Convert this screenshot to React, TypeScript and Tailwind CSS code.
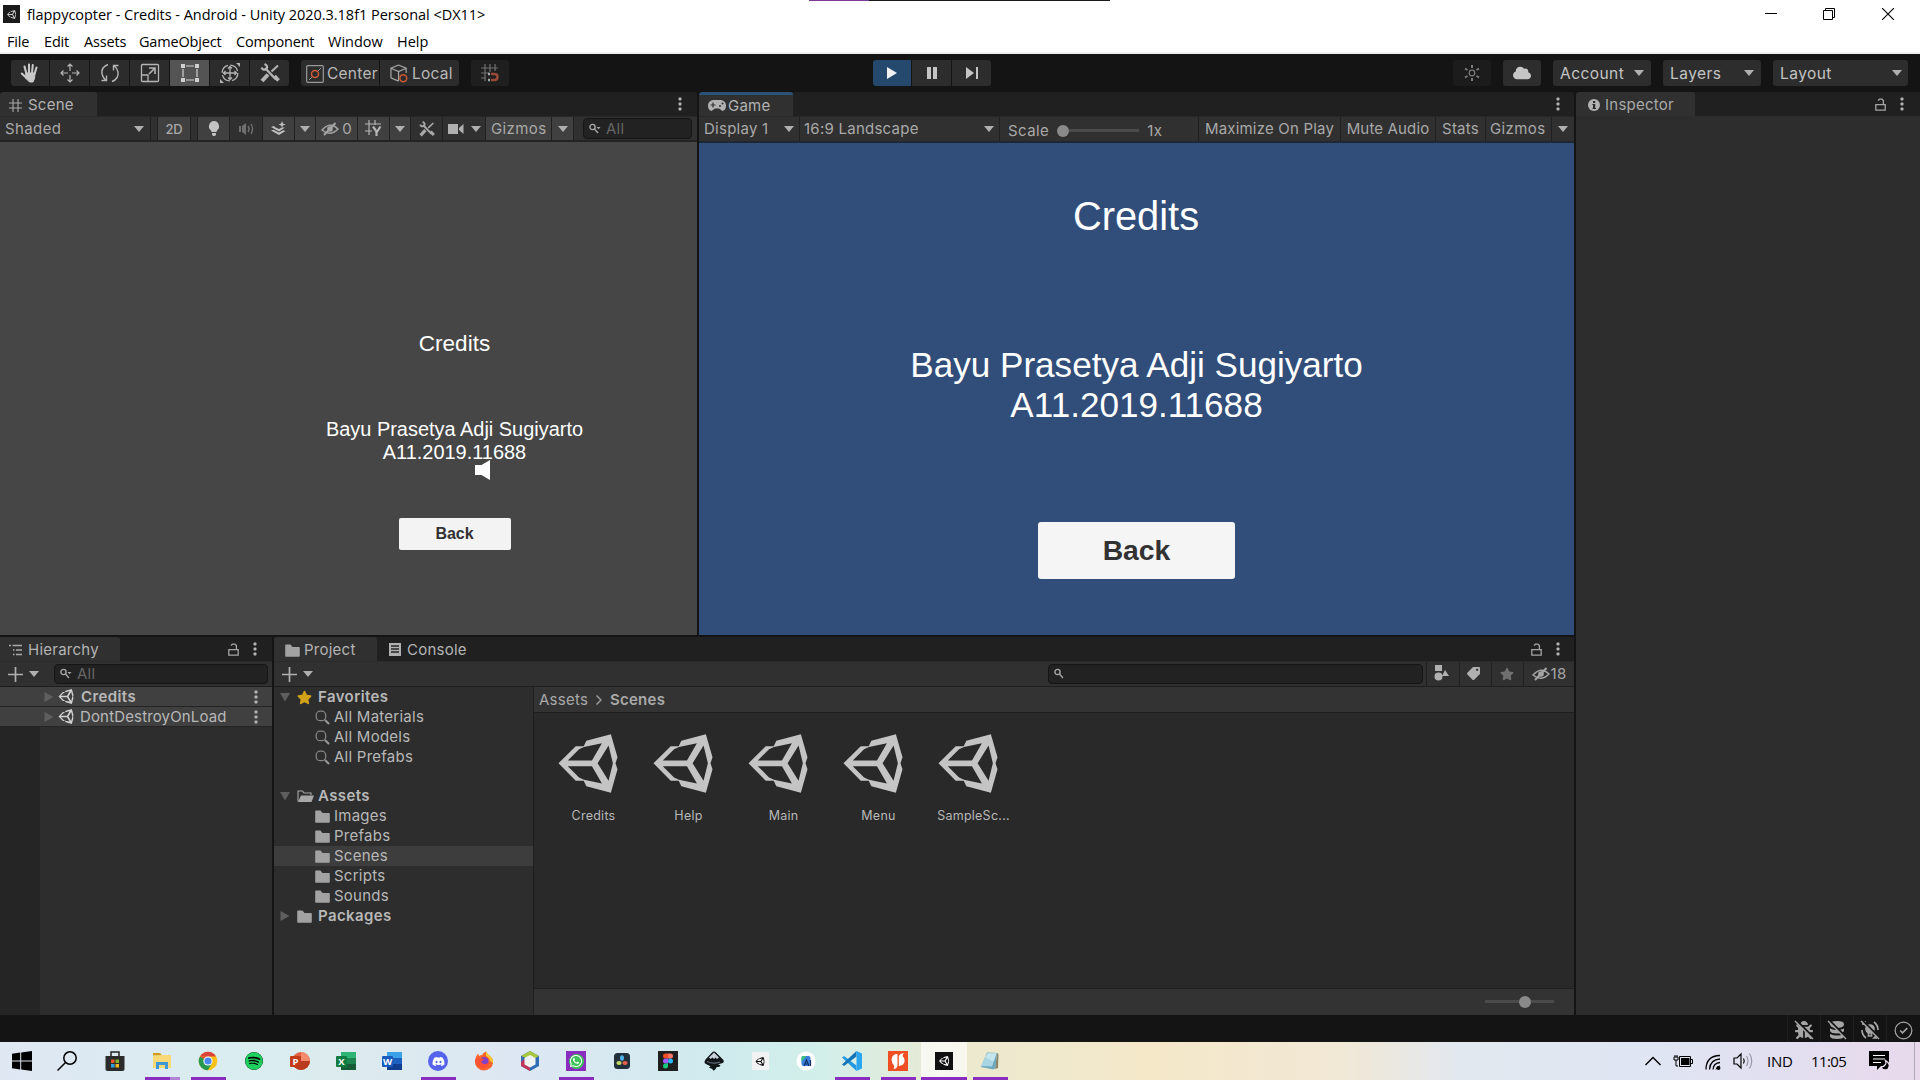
import React from "react";
import type { ReactNode } from "react";
import { FaSpotify, FaDiscord, FaWhatsapp, FaCloud, FaStar, FaBug, FaTag } from "react-icons/fa";

const Arrow = ({ className = "text-[#b0b0b0]" }: { className?: string }) => (
  <svg viewBox="0 0 10 6" className={`h-[6px] w-[10px] shrink-0 ${className}`}>
    <path d="M0 0h10L5 6z" fill="currentColor" />
  </svg>
);

const Dots = ({ className = "" }: { className?: string }) => (
  <svg viewBox="0 0 4 14" className={`h-[14px] w-[4px] shrink-0 text-[#b5b5b5] ${className}`} fill="currentColor">
    <rect x=".5" y="0.5" width="3" height="3" rx="1" />
    <rect x=".5" y="5.5" width="3" height="3" rx="1" />
    <rect x=".5" y="10.5" width="3" height="3" rx="1" />
  </svg>
);

const Lock = ({ className = "" }: { className?: string }) => (
  <svg viewBox="0 0 11 13" className={`h-[13px] w-[11px] shrink-0 text-[#a5a5a5] ${className}`} fill="none" stroke="currentColor" strokeWidth="1.3">
    <path d="M.8 6.6h9.4v5.6H.8z" />
    <path d="M8.4 6.500V2.600L7 1.200H4.500L3 2.600" />
  </svg>
);

const UnityLogo = ({ className = "" }: { className?: string }) => (
  <svg viewBox="0 0 178 178" className={className} fill="currentColor" fillRule="evenodd">
    <path d="M0 88L52 37h24l8-17L158 1l20 69-6 18 6 18-20 71-74-19-8-17H52zM28 80h73l30-52-54 11-15 7zM28 97l34 34 15 7 54 11-30-52zM118 88l33 53 13-53-13-53z" />
  </svg>
);

const Glass = ({ drop = false }: { drop?: boolean }) => (
  <svg viewBox="0 0 14 12" className="h-3 w-[14px] shrink-0 text-[#a8a8a8]" fill="none" stroke="currentColor" strokeWidth="1.4">
    <circle cx="3.500" cy="4" r="2.600" />
    <path d="M5.500 6l3.500 4" />
    {drop && <path d="M7.500 4h4l-2 2.200z" fill="currentColor" stroke="none" />}
  </svg>
);

const SearchGlass = () => (
  <svg viewBox="0 0 15 15" className="h-[15px] w-[15px] shrink-0" fill="none">
    <rect x="1.200" y="1.200" width="9.500" height="9.500" rx="4" stroke="#858585" strokeWidth="1.300" />
    <path d="M10 10l4 4" stroke="#9a9a9a" strokeWidth="2" />
  </svg>
);

const Folder = () => (
  <svg viewBox="0 0 15 13" className="h-[13px] w-[15px] shrink-0 text-[#a2a2a2]" fill="currentColor">
    <path d="M1 .5h4.500L7.500 3H14q.8 0 .8.8V12q0 .8-.8.8H1q-.8 0-.8-.8V1.300Q.2.5 1 .5z" />
  </svg>
);

const OpenFolder = () => (
  <svg viewBox="0 0 17 13" className="h-[13px] w-[17px] shrink-0 text-[#a8a8a8]" fill="none">
    <path d="M1 11.500V1h4.500L7 3h7v2" stroke="currentColor" strokeWidth="1.100" />
    <path d="M4 5.500h13L14.500 12H1z" fill="currentColor" />
  </svg>
);

const Plus = () => (
  <svg viewBox="0 0 15 15" className="h-[15px] w-[15px] shrink-0 text-[#b0b0b0]" stroke="currentColor" strokeWidth="1.700">
    <path d="M7.500 0v15M0 7.500h15" />
  </svg>
);

const Wrench = ({ className = "" }: { className?: string }) => (
  <svg viewBox="0 0 20 20" className={className} fill="none" stroke="currentColor">
    <path d="M5 5l11 11.500" strokeWidth="2.400" />
    <path d="M1.500 4.500q1.500 3.500 5 1.500Q8.500 3 4.500 1" strokeWidth="2.200" />
    <path d="M14.500 13l4 4.500" strokeWidth="3.600" />
    <path d="M18 2.500l-6.500 6" strokeWidth="2" />
    <path d="M8 11.500l-6 6.500" strokeWidth="4" />
  </svg>
);

const EyeOff = () => (
  <svg viewBox="0 0 18 14" className="h-[14px] w-[18px] shrink-0 text-[#a5a5a5]" fill="none" stroke="currentColor">
    <path d="M1 8Q9-1 17 7Q9 15 1 8z" strokeWidth="1.400" />
    <circle cx="9" cy="7" r="2.800" fill="currentColor" stroke="none" />
    <path d="M3 13L14.500 1" strokeWidth="2" />
  </svg>
);

const Triangle = ({ open }: { open: boolean }) => (
  <svg viewBox="0 0 10 10" className="h-[10px] w-[10px] shrink-0 text-[#5e5e5e]" fill="currentColor">
    {open ? <path d="M0 1h10L5 9.500z" /> : <path d="M.5 0L9.500 5l-9 5z" />}
  </svg>
);

function TitleBar() {
  return (
    <div className="flex h-[28px] items-start bg-white text-black">
      <div className="ml-[3px] mt-[5px] flex h-[18px] w-[17px] items-center justify-center bg-[#1a1a1a] text-[#c9c9c9]">
        <UnityLogo className="h-[9px] w-[9px]" />
      </div>
      <div className="ml-[7px] w-[782px] whitespace-nowrap font-['Open_Sans'] text-[14.500px] leading-[29px] tracking-[-0.035px]">
        flappycopter - Credits - Android - Unity 2020.3.18f1 Personal &lt;DX11&gt;
      </div>
      <div className="flex h-px w-[301px]">
        <div className="w-[60px] bg-[#7b3a96]" />
        <div className="grow bg-[#1c1a1d]" />
      </div>
      <div className="ml-auto mr-[26px] mt-[8px] flex">
        <svg viewBox="0 0 12 12" className="h-3 w-3" stroke="#000"><path d="M0 5.500h12" /></svg>
        <svg viewBox="0 0 12 12" className="ml-[46px] h-3 w-3" stroke="#000" fill="none"><path d="M.5 2.500h9v9h-9zM2.500 2.500v-2h9v9h-2" /></svg>
        <svg viewBox="0 0 12 12" className="ml-[47px] h-3 w-3" stroke="#000" strokeWidth="1.100"><path d="M0 0l12 12M12 0L0 12" /></svg>
      </div>
    </div>
  );
}

function MenuBar() {
  return (
    <div className="flex h-[26px] border-b-2 border-[#f0f0f0] bg-white font-['Open_Sans'] text-[14.500px] leading-[27px] tracking-[-0.18px] text-black">
      <span className="ml-[7px] w-[37px]">File</span>
      <span className="w-[40px]">Edit</span>
      <span className="w-[55px]">Assets</span>
      <span className="w-[97px]">GameObject</span>
      <span className="w-[92px]">Component</span>
      <span className="w-[69px] tracking-[0px]">Window</span>
      <span className="tracking-[0px]">Help</span>
    </div>
  );
}

const Tool = ({ w, on = false, children }: { w: string; on?: boolean; children: ReactNode }) => (
  <div className={`flex items-center justify-center ${w} ${on ? "bg-[#545454]" : "bg-[#2c2c2c]"}`}>{children}</div>
);

const ic = "h-5 w-5";

function MainToolbar() {
  return (
    <div className="flex h-[38px] items-center bg-[#141414] text-[#b4b4b4]">
      <div className="ml-[11px] flex h-[26px] gap-px overflow-hidden rounded-[3px]">
        <Tool w="w-[38px]">
          <svg viewBox="0 0 20 20" className={ic} fill="none" stroke="#c8c8c8" strokeWidth="2.100" strokeLinecap="round">
            <path d="M6.500 11L4.500 3.500M9 10V1.500M12 10l.8-8M14.500 11l2-6.500M6.500 15L1.800 10.500" />
            <path d="M6 10h9l-.5 5.500-1.500 3.500H9.500L6 15.500z" fill="#c8c8c8" strokeWidth="1" />
          </svg>
        </Tool>
        <Tool w="w-[39px]">
          <svg viewBox="0 0 20 20" className={ic} fill="none" stroke="currentColor" strokeWidth="1.200">
            <path d="M10 1v7M10 12v7M1 10h7M12 10h7M7.500 3.500L10 1l2.500 2.500M7.500 16.500L10 19l2.500-2.500M3.500 7.500L1 10l2.500 2.500M16.500 7.500L19 10l-2.500 2.500" />
          </svg>
        </Tool>
        <Tool w="w-[39px]">
          <svg viewBox="0 0 20 20" className={ic} fill="none" stroke="currentColor" strokeWidth="1.400">
            <path d="M8 1.500Q1 4 2 11q1 4 4 6.500M1.500 17.500h5v-5M12 18.500Q19 16 18 9q-1-4-4-6.500M18.500 2.500h-5v5" />
          </svg>
        </Tool>
        <Tool w="w-[39px]">
          <svg viewBox="0 0 20 20" className={ic} fill="none" stroke="currentColor" strokeWidth="1.300">
            <rect x="1.500" y="1.500" width="17" height="17" rx="1" />
            <path d="M9 5h6v6M15 5l-6 6" strokeWidth="1.600" />
            <path d="M1.500 12H8v6.500" />
          </svg>
        </Tool>
        <Tool w="w-[39px]" on>
          <svg viewBox="0 0 20 20" className={ic} fill="none" stroke="#d0d0d0" strokeWidth="1.200">
            <path d="M6 3h8M6 17h8M3 6v8M17 6v8" />
            <path d="M1 1h4v4H1zM15 1h4v4h-4zM1 15h4v4H1zM15 15h4v4h-4z" fill="#d0d0d0" stroke="none" />
          </svg>
        </Tool>
        <Tool w="w-[39px]">
          <svg viewBox="0 0 20 20" className={ic} fill="none" stroke="currentColor" strokeWidth="1.300">
            <circle cx="10" cy="10" r="7.800" strokeDasharray="10 2.250" />
            <path d="M10 4v12M4 10h12M8 5.500l2-2 2 2M8 14.500l2 2 2-2M5.500 8l-2 2 2 2M14.500 8l2 2-2 2" />
            <path d="M16 0h4v4zM0 16v4h4z" fill="currentColor" stroke="none" />
          </svg>
        </Tool>
        <Tool w="w-[39px]"><Wrench className={`ml-px ${ic}`} /></Tool>
      </div>
      <div className="ml-[12px] flex h-[26px] gap-px overflow-hidden rounded-[3px] text-[15.500px] tracking-[0.25px] text-[#b9b9b9]">
        <div className="flex w-[78px] items-center bg-[#2c2c2c] pl-[5px] pt-px">
          <svg viewBox="0 0 18 18" className="mr-[3px] h-[18px] w-[18px] shrink-0" fill="none">
            <rect x=".7" y=".7" width="16.600" height="16.600" rx="1" stroke="#999" strokeWidth="1.200" />
            <path d="M3 15l3-3M12 6l3-3" stroke="#999" />
            <circle cx="9" cy="9" r="3.500" stroke="#cf5a36" strokeWidth="1.500" />
          </svg>
          Center
        </div>
        <div className="flex w-[79px] items-center bg-[#2c2c2c] pl-[10px] pt-px">
          <svg viewBox="0 0 20 20" className="mr-[3px] h-[19px] w-[19px] shrink-0" fill="none" stroke="#a5a5a5" strokeWidth="1.300">
            <path d="M9 1l8 3.500v5M9 1L1 4.500v10L9 18M1 4.500L9 8l8-3.500M9 8v10" />
            <circle cx="14" cy="15" r="3.600" stroke="#cf5a36" strokeWidth="1.600" />
          </svg>
          Local
        </div>
      </div>
      <div className="ml-[12px] flex h-[26px] w-[38px] items-center justify-center rounded-[3px] bg-[#1f1f1f]">
        <svg viewBox="0 0 18 18" className="h-[18px] w-[18px]" fill="none" stroke="#707070" strokeWidth="1.200">
          <path d="M4 0v17M9 0v8M14 0v7M0 4h17M0 9h8M0 14h5" />
          <path d="M10 10h3.500q3 0 3 3t-3 3H10" stroke="#9a4a36" strokeWidth="2.400" />
          <path d="M7 10h2M7 16h2" stroke="#aaa" strokeWidth="2.400" />
        </svg>
      </div>
      <div className="ml-[364px] flex h-[26px] gap-px overflow-hidden rounded-[3px]">
        <div className="flex w-[38px] items-center justify-center bg-[#24496d]">
          <svg viewBox="0 0 10 12" className="h-3 w-[10px]"><path d="M0 0l10 6-10 6z" fill="#f2f2f2" /></svg>
        </div>
        <div className="flex w-[39px] items-center justify-center bg-[#2d2d2d]">
          <svg viewBox="0 0 10 12" className="h-3 w-[10px]"><path d="M0 0h4v12H0zM6 0h4v12H6z" fill="#c4c4c4" /></svg>
        </div>
        <div className="flex w-[39px] items-center justify-center bg-[#2d2d2d]">
          <svg viewBox="0 0 12 12" className="h-3 w-3"><path d="M0 0l8 6-8 6zM10 0h2v12h-2z" fill="#c4c4c4" /></svg>
        </div>
      </div>
      <div className="ml-auto mr-[12px] flex h-[26px] gap-[12px] text-[15.500px] tracking-[0.45px] text-[#c4c4c4]">
        <div className="flex w-[38px] items-center justify-center rounded-[3px] bg-[#1c1c1c]">
          <svg viewBox="0 0 16 16" className="h-4 w-4" fill="none" stroke="#7c7c7c" strokeWidth="1.200">
            <circle cx="8" cy="8" r="2.800" />
            <path d="M8 0v3M8 13v3M1 3.500l2.500 1.500M15 3.500L12.500 5M1 12.500L3.500 11M15 12.500L12.500 11" strokeWidth="2" />
          </svg>
        </div>
        <div className="flex w-[38px] items-center justify-center rounded-[3px] bg-[#2d2d2d]"><FaCloud className="h-[18px] w-[18px] text-[#c6c6c6]" /></div>
        <div className="flex w-[98px] items-center justify-between rounded-[3px] bg-[#2d2d2d] pl-[7px] pr-[7px]"><span className="mt-px">Account</span><Arrow /></div>
        <div className="flex w-[98px] items-center justify-between rounded-[3px] bg-[#2d2d2d] pl-[7px] pr-[7px]"><span className="mt-px">Layers</span><Arrow /></div>
        <div className="flex w-[135px] items-center justify-between rounded-[3px] bg-[#2d2d2d] pl-[7px] pr-[6px]"><span className="mt-px">Layout</span><Arrow /></div>
      </div>
    </div>
  );
}

const Seg = ({ w, on = false, children, className = "" }: { w: string; on?: boolean; children?: ReactNode; className?: string }) => (
  <div className={`flex shrink-0 items-center border-r border-[#202020] ${w} ${on ? "bg-[#404040]" : "bg-[#303030]"} ${className}`}>{children}</div>
);

function ScenePanel() {
  return (
    <div className="flex w-[697px] flex-col overflow-hidden rounded-t-[3px]">
      <div className="flex h-[24px] items-center bg-[#202020]">
        <div className="flex h-full w-[97px] items-center rounded-tr-[3px] bg-[#303030] pl-[9px] pt-[2px] text-[#b4b4b4]">
          <svg viewBox="0 0 13 13" className="mr-[6px] h-[13px] w-[13px]" stroke="#aaa" strokeWidth="1.100"><path d="M4 0v13M9 0v13M0 4h13M0 9h13" /></svg>
          Scene
        </div>
        <Dots className="ml-auto mr-[15px]" />
      </div>
      <div className="flex h-[26px] border-b-2 border-t border-t-[#282828] border-b-[#232323] bg-[#303030] text-[#a9a9a9]">
        <Seg w="w-[151px]" className="justify-between pl-[5px] pr-[6px] tracking-[0.4px]">Shaded<Arrow /></Seg>
        <Seg w="w-[7px]" />
        <Seg w="w-[33px]" on className="justify-center text-[13px] font-medium tracking-[-0.2px]">2D</Seg>
        <Seg w="w-[7px]" />
        <Seg w="w-[32px]" on className="justify-center">
          <svg viewBox="0 0 12 15" className="h-[15px] w-3" fill="#c4c4c4"><path d="M6 0a5.300 5.300 0 0 1 3 9.500L8.500 11h-5L3 9.500A5.300 5.300 0 0 1 6 0zM4 12h4v1.500L7 15H5l-1-1.500z" /></svg>
        </Seg>
        <Seg w="w-[33px]" className="justify-center">
          <svg viewBox="0 0 16 12" className="ml-px h-3 w-4" fill="#6f6f6f"><path d="M0 3h2v6H0zM3 3l4-3v12L3 9z" /><path d="M9 3q2 3 0 6M12 1q3 5 0 10" stroke="#6f6f6f" fill="none" strokeWidth="1.400" /></svg>
        </Seg>
        <Seg w="w-[32px]" on className="justify-center">
          <svg viewBox="0 0 15 14" className="-mt-px h-[14px] w-[15px]" fill="#c0c0c0"><path d="M0 6l3-1 1.500 1.500L8 8l3-1.500 3 0L8 10.500zM0 9.500l2.500-.8L8 11.500l4-2.300 2.500.8L8 14z" /><path d="M11 0l.9 2.600 2.600.9-2.600.9L11 7l-.9-2.600-2.600-.9 2.600-.9z" /></svg>
        </Seg>
        <Seg w="w-[21px]" on className="justify-center"><Arrow /></Seg>
        <Seg w="w-[42px]" on className="justify-center gap-[3px]"><EyeOff />0</Seg>
        <Seg w="w-[32px]" on className="justify-center">
          <svg viewBox="0 0 17 17" className="-ml-px h-[17px] w-[17px]" fill="none" stroke="#b5b5b5" strokeWidth="1.200"><path d="M4 0v15M10 0v5M0 4h16M0 11h7" /><path d="M8 6.500l3.500 5v4.500M15.500 6.500l-4 6" strokeWidth="2.200" /></svg>
        </Seg>
        <Seg w="w-[21px]" on className="justify-center"><Arrow /></Seg>
        <Seg w="w-[32px]" className="justify-center"><Wrench className="h-4 w-4" /></Seg>
        <Seg w="w-[43px]" className="justify-center gap-[7px]">
          <svg viewBox="0 0 16 12" className="h-3 w-4" fill="#b0b0b0"><path d="M0 1h10v10H0zM11 5l4.500-4v10L11 7z" /></svg>
          <Arrow className="w-[9px] text-[#b0b0b0]" />
        </Seg>
        <Seg w="w-[66px]" on className="pl-[5px] tracking-[0.4px]">Gizmos</Seg>
        <Seg w="w-[22px]" on className="justify-center"><Arrow /></Seg>
        <div className="ml-[9px] mt-px flex h-[21px] w-[109px] items-center gap-[3px] rounded-[4px] border border-[#151515] bg-[#222] pl-[5px] text-[#666]"><Glass drop />All</div>
      </div>
      <div className="flex grow flex-col items-center bg-[#464646] pl-[212px] font-['Liberation_Sans'] tracking-normal text-white">
        <div className="mt-[191px] text-[22.500px] leading-[22px]">Credits</div>
        <div className="mt-[63px] whitespace-nowrap text-center text-[19.950px] leading-[22.600px]">
          Bayu Prasetya Adji Sugiyarto<br />A11.2019.11688
        </div>
        <svg viewBox="0 0 15 20" className="-mt-[3px] ml-[56px] h-5 w-[15px]" fill="#fff"><path d="M0 5h6.500L15 0v20l-8.500-5H0z" /></svg>
        <div className="mt-[38px] flex h-[32px] w-[112px] items-center justify-center rounded-[2px] bg-[#f3f3f3] text-[16px] font-bold text-[#323232]">Back</div>
      </div>
    </div>
  );
}

function GamePanel() {
  return (
    <div className="ml-[2px] flex w-[875px] flex-col overflow-hidden rounded-t-[3px]">
      <div className="flex h-[24px] items-center bg-[#202020]">
        <div className="flex h-full w-[94px] items-center rounded-t-[3px] border-t-[3px] border-[#2b5378] bg-[#303030] pl-[9px] text-[#b4b4b4]">
          <svg viewBox="0 0 18 11" className="mr-[2px] h-[11px] w-[18px]">
            <path d="M5 0h8q5 1 5 5.500T14.500 11L11 8.500H7L3.500 11Q0 10 0 5.500T5 0z" fill="#b2b2b2" />
            <path d="M5 2.500v5M2.500 5h5" stroke="#303030" strokeWidth="1.200" />
            <circle cx="14.500" cy="3.500" r="1" fill="#303030" /><circle cx="12" cy="6" r="1" fill="#303030" />
          </svg>
          Game
        </div>
        <Dots className="ml-auto mr-[14px]" />
      </div>
      <div className="flex h-[27px] border-b-2 border-t border-t-[#282828] border-b-[#1f2733] bg-[#303030] text-[#a9a9a9]">
        <Seg w="w-[101px]" className="justify-between pl-[5px] pr-[5px]">Display 1<Arrow /></Seg>
        <Seg w="w-[200px]" className="justify-between pl-[4px] pr-[5px]">16:9 Landscape<Arrow /></Seg>
        <Seg w="w-[199px]" className="pl-[8px] pt-[3px] tracking-[0.4px]">
          Scale
          <div className="ml-[8px] flex w-[82px] items-center">
            <div className="h-3 w-3 rounded-full bg-[#8a8a8a]" />
            <div className="h-[3px] grow bg-[#4b4b4b]" />
          </div>
          <span className="ml-[8px]">1x</span>
        </Seg>
        <Seg w="w-[142px]" className="justify-center tracking-[0.2px]">Maximize On Play</Seg>
        <Seg w="w-[95px]" className="justify-center tracking-[0.15px]">Mute Audio</Seg>
        <Seg w="w-[50px]" className="justify-center">Stats</Seg>
        <Seg w="w-[66px]" className="pl-[4px] tracking-[0.4px]">Gizmos</Seg>
        <div className="flex grow items-center justify-center"><Arrow /></div>
      </div>
      <div className="flex grow flex-col items-center bg-[#314d79] font-['Liberation_Sans'] tracking-normal text-white">
        <div className="mr-px mt-[51px] text-[39.800px] leading-[44px]">Credits</div>
        <div className="mt-[107px] whitespace-nowrap text-center text-[35.100px] leading-[40px]">
          Bayu Prasetya Adji Sugiyarto<br />A11.2019.11688
        </div>
        <div className="mt-[97px] flex h-[57px] w-[197px] items-center justify-center rounded-[3px] bg-[#f5f5f5] pb-[2px] text-[28.300px] font-bold text-[#323232]">Back</div>
      </div>
    </div>
  );
}

const HierarchyRow = ({ label, bold = false }: { label: string; bold?: boolean }) => (
  <div className="flex h-[20px] items-center border-b border-[#242424] bg-[#404040] pl-[44px] text-[#b8b8b8]">
    <Triangle open={false} />
    <UnityLogo className="ml-[4px] h-[15px] w-[16px] text-[#d0d0d0]" />
    <span className={bold ? "ml-[7px] font-semibold tracking-[0.4px]" : "ml-[6px] tracking-[0.15px]"}>{label}</span>
    <Dots className="ml-auto mr-[14px]" />
  </div>
);

function HierarchyPanel() {
  return (
    <div className="flex w-[272px] flex-col">
      <div className="flex h-[24px] items-center bg-[#202020]">
        <div className="flex h-full w-[120px] items-center rounded-tr-[3px] bg-[#303030] pl-[9px] pt-[2px] text-[#b4b4b4]">
          <svg viewBox="0 0 13 12" className="mr-[6px] h-3 w-[13px]" stroke="#aaa" strokeWidth="1.300"><path d="M0 1.500h2M3.500 1.500H13M4 6h1.500M7 6h6M4 10.500h1.500M7 10.500h6" /></svg>
          Hierarchy
        </div>
        <Lock className="ml-auto" />
        <Dots className="ml-[14px] mr-[15px]" />
      </div>
      <div className="flex h-[26px] items-center border-b border-t border-b-[#1e1e1e] border-t-[#2a2a2a] bg-[#303030] pl-[8px]">
        <Plus />
        <Arrow className="ml-[6px] w-[9px] text-[#b0b0b0]" />
        <div className="-mt-px ml-[15px] flex h-[20px] w-[214px] items-center gap-[3px] rounded-[4px] border border-[#151515] bg-[#222] pl-[5px] text-[#666]"><Glass drop />All</div>
      </div>
      <HierarchyRow label="Credits" bold />
      <HierarchyRow label="DontDestroyOnLoad" />
      <div className="flex grow bg-[#2d2d2d]"><div className="w-[40px] bg-[#252525]" /></div>
    </div>
  );
}

const TreeRoot = ({ label, open, icon }: { label: string; open: boolean; icon: ReactNode }) => (
  <div className="flex h-[20px] items-center pl-[6px] font-semibold tracking-[0.4px]">
    <Triangle open={open} />
    <div className="ml-[7px] mr-[4px] flex w-[17px]">{icon}</div>
    {label}
  </div>
);

const TreeLeaf = ({ label, icon, on = false }: { label: string; icon: ReactNode; on?: boolean }) => (
  <div className={`flex h-[20px] items-center gap-[4px] pl-[41px] ${on ? "bg-[#3d3d3d]" : ""}`}>{icon}{label}</div>
);

function ProjectPanel() {
  return (
    <div className="ml-[2px] flex w-[1300px] flex-col">
      <div className="flex h-[24px] items-center bg-[#202020]">
        <div className="flex h-full w-[103px] items-center rounded-t-[3px] bg-[#303030] pl-[11px] pt-[2px] text-[#b4b4b4]">
          <Folder /><span className="ml-[4px]">Project</span>
        </div>
        <svg viewBox="0 0 12 13" className="ml-[12px] mr-[6px] mt-px h-[13px] w-3"><path d="M0 0h12v13H0z" fill="#b0b0b0" /><path d="M2 3h8M2 6h8M2 9h8" stroke="#252525" strokeWidth="1.400" /></svg>
        <span className="mt-[2px] text-[#b4b4b4]">Console</span>
        <Lock className="ml-auto" />
        <Dots className="ml-[14px] mr-[14px]" />
      </div>
      <div className="flex h-[26px] items-center border-b border-t border-b-[#1e1e1e] border-t-[#2a2a2a] bg-[#303030] pl-[8px]">
        <Plus />
        <Arrow className="ml-[6px] w-[9px] text-[#b0b0b0]" />
        <div className="-mt-px ml-auto mr-[3px] flex h-[20px] w-[375px] items-center rounded-[4px] border border-[#151515] bg-[#222] pl-[5px]"><Glass /></div>
        <div className="flex h-full w-[33px] items-center justify-center border-l border-[#202020] pb-[2px] pr-[3px]">
          <svg viewBox="0 0 15 16" className="h-4 w-[15px]" fill="#b0b0b0"><path d="M1 0h7v6H1zM11 5l4 6H8z" /><circle cx="4.500" cy="11.500" r="4" /></svg>
        </div>
        <div className="flex h-full w-[32px] items-center justify-center border-l border-[#202020] pb-[2px] pr-[4px]"><FaTag className="h-[13px] w-[13px] -scale-x-100 text-[#b0b0b0]" /></div>
        <div className="flex h-full w-[32px] items-center justify-center border-l border-[#202020] pb-px pr-[2px]"><FaStar className="h-[14px] w-[14px] text-[#6f6f6f]" /></div>
        <div className="flex h-full w-[51px] items-center justify-center border-l border-[#202020] text-[#a5a5a5]"><EyeOff /><span className="ml-px">18</span></div>
      </div>
      <div className="flex grow">
        <div className="w-[260px] border-r border-[#1e1e1e] bg-[#2d2d2d] text-[#b8b8b8]">
          <TreeRoot label="Favorites" open icon={<FaStar className="h-[15px] w-[15px] text-[#d2a118]" />} />
          <TreeLeaf label="All Materials" icon={<SearchGlass />} />
          <TreeLeaf label="All Models" icon={<SearchGlass />} />
          <TreeLeaf label="All Prefabs" icon={<SearchGlass />} />
          <div className="h-[19px]" />
          <TreeRoot label="Assets" open icon={<OpenFolder />} />
          <TreeLeaf label="Images" icon={<Folder />} />
          <TreeLeaf label="Prefabs" icon={<Folder />} />
          <TreeLeaf label="Scenes" icon={<Folder />} on />
          <TreeLeaf label="Scripts" icon={<Folder />} />
          <TreeLeaf label="Sounds" icon={<Folder />} />
          <TreeRoot label="Packages" open={false} icon={<Folder />} />
        </div>
        <div className="flex grow flex-col bg-[#292929] text-[#a9a9a9]">
          <div className="flex h-[26px] items-center border-b border-[#1e1e1e] bg-[#333] pl-[5px]">
            <span className="w-[57px]">Assets</span>
            <svg viewBox="0 0 6 10" className="h-[10px] w-[6px]" fill="none" stroke="#999" strokeWidth="1.500"><path d="M.5.5L5 5 .5 9.500" /></svg>
            <span className="ml-[8px] font-semibold">Scenes</span>
          </div>
          <div className="flex grow pl-[12px] pt-[21px] text-[12.500px] leading-4 text-[#b8b8b8]">
            {["Credits", "Help", "Main", "Menu", "SampleSc..."].map((n) => (
              <div key={n} className="flex w-[95px] flex-col items-center">
                <UnityLogo className="mr-[11px] h-[59px] w-[60px] text-[#c4c4c4]" />
                <span className="mt-[15px]">{n}</span>
              </div>
            ))}
          </div>
          <div className="flex h-[27px] items-center justify-end border-t border-[#202020] bg-[#333] pb-px pr-[20px]">
            <div className="h-[3px] w-[34px] bg-[#4b4b4b]" />
            <div className="h-3 w-3 rounded-full bg-[#8a8a8a]" />
            <div className="h-[3px] w-[23px] bg-[#4b4b4b]" />
          </div>
        </div>
      </div>
    </div>
  );
}

function InspectorPanel() {
  return (
    <div className="ml-[2px] flex grow flex-col overflow-hidden rounded-t-[3px] bg-[#2d2d2d]">
      <div className="flex h-[24px] items-center bg-[#202020]">
        <div className="flex h-full w-[119px] items-center rounded-t-[3px] bg-[#303030] pl-[12px] pt-[2px] text-[#a9a9a9]">
          <svg viewBox="0 0 12 12" className="mr-[5px] h-3 w-3"><circle cx="6" cy="6" r="6" fill="#b2b2b2" /><path d="M5 2h2.200v2H5zM4.500 5h2.700v4h.8v1H4.500V9H5V6h-.5z" fill="#2a2a2a" /></svg>
          Inspector
        </div>
        <Lock className="ml-auto" />
        <Dots className="ml-[14px] mr-[16px]" />
      </div>
    </div>
  );
}

const StatusCell = ({ children }: { children: ReactNode }) => (
  <div className="flex h-full w-[33px] items-center justify-center border-l border-[#202020] pt-[3px]">{children}</div>
);

const Slash = () => (
  <svg viewBox="0 0 20 20" className="absolute inset-0 h-5 w-5"><path d="M3 1l17 17" stroke="#141414" strokeWidth="2" /><path d="M1 1l18 18" stroke="#a5a5a5" strokeWidth="1.500" /></svg>
);

function StatusBar() {
  return (
    <div className="flex h-[27px] items-center justify-end bg-[#141414] pr-px text-[#a5a5a5]">
      <StatusCell><div className="relative"><FaBug className="h-5 w-5 p-px" /><Slash /></div></StatusCell>
      <StatusCell>
        <div className="relative">
          <svg viewBox="0 0 20 20" className="h-5 w-5" fill="currentColor"><path d="M3 4q0-3 7-3t7 3v1q-1 3-7 3T3 5zM3 8.500q7 3 14 0V11q-1 2.500-7 2.500T3 11zM3 14q7 3 14 0v2.500q-1 2.500-7 2.500t-7-2.500z" /></svg>
          <Slash />
        </div>
      </StatusCell>
      <StatusCell>
        <div className="relative">
          <svg viewBox="0 0 20 20" className="h-5 w-5" fill="none" stroke="currentColor" strokeWidth="1.700"><path d="M3 5V2h3M14 2q4 3 4 8M17 15l-3 3h3M6 18Q2 15 2 10" /><circle cx="10" cy="9" r="4" fill="currentColor" /><path d="M8.500 13v3h3v-3" /></svg>
          <Slash />
        </div>
      </StatusCell>
      <StatusCell>
        <svg viewBox="0 0 20 20" className="h-[19px] w-[19px]" fill="none" stroke="currentColor" strokeWidth="1.300"><circle cx="10" cy="10" r="8.800" /><path d="M6.500 10l2.500 2.500 5-5" strokeWidth="1.700" /></svg>
      </StatusCell>
    </div>
  );
}

const Office = ({ letter, dark, mid, light, tab, round = false }: { letter: string; dark: string; mid: string; light: string; tab: string; round?: boolean }) => (
  <svg viewBox="0 0 20 20" className="h-5 w-5">
    {round ? (
      <><circle cx="11" cy="10" r="9" fill={mid} /><path d="M11 1a9 9 0 0 1 9 9h-9z" fill={light} /><path d="M2 10h18a9 9 0 0 1-18 0z" fill={dark} /></>
    ) : (
      <><path d="M5 1h15v6H5z" fill={light} /><path d="M5 7h15v6H5z" fill={mid} /><path d="M5 13h15v6H5z" fill={dark} /></>
    )}
    <rect x="0" y="5" width="11" height="11" rx="1" fill={tab} />
    <text x="5.500" y="14" fontSize="9.500" fontWeight="700" fill="#fff" textAnchor="middle" fontFamily="Open Sans, sans-serif">{letter}</text>
  </svg>
);

const Slot = ({ bar, bg = "", children }: { bar?: string; bg?: string; children: ReactNode }) => (
  <div className={`flex w-[46px] flex-col items-center justify-between pt-[9px] ${bg}`}>
    {children}
    {bar ? <div className={`h-[3px] bg-[#8a2cc0] ${bar}`} /> : <div />}
  </div>
);

function Taskbar() {
  return (
    <div className="flex h-[38px] bg-[linear-gradient(90deg,#dfe7f3_0%,#d9edf0_13%,#dcebee_18%,#dde7f3_27%,#cfebed_38%,#d3efea_43%,#ebe9cf_50%,#f5e8c9_60%,#f1e8d6_70%,#e2e8ef_76%,#dfe6f3_85%,#e2dff0_93%,#e8d9ec_100%)]">
      <div className="flex w-[44px] items-start justify-center pt-[9px]">
        <svg viewBox="0 0 20 20" className="h-5 w-5"><path d="M0 2.800L8.200 1.600V9.500H0zM9.200 1.500L20 0v9.500H9.200zM0 10.500h8.200v7.900L0 17.200zM9.200 10.500H20V20L9.200 18.500z" /></svg>
      </div>
      <div className="flex w-[46px] items-start justify-center pt-[9px]">
        <svg viewBox="0 0 20 20" className="h-5 w-5" fill="none" stroke="#000" strokeWidth="1.500"><circle cx="13" cy="7" r="6.200" /><path d="M8.500 11.500L0.500 19.500" /></svg>
      </div>
      <Slot>
        <svg viewBox="0 0 20 20" className="ml-[4px] h-5 w-5"><path d="M6 5V1h8v4" fill="none" stroke="#222" strokeWidth="1.500" /><path d="M.5 5h19v13q0 2-2 2h-15q-2 0-2-2z" fill="#2b2b2b" /><path d="M6 8.500h3.500V12H6z" fill="#e8562a" /><path d="M10.500 8.500H14V12h-3.500z" fill="#7db52c" /><path d="M6 13h3.500v3.500H6z" fill="#2fa3e0" /><path d="M10.500 13H14v3.500h-3.500z" fill="#f2b519" /></svg>
      </Slot>
      <div className="ml-[3px] flex w-[46px] flex-col items-center justify-between pt-[9px]">
        <svg viewBox="0 0 20 20" className="h-5 w-5"><path d="M1 2h7l2 2.500H1z" fill="#d49b1a" /><path d="M1 5l9-1h9v13H1z" fill="#f9d978" /><path d="M4 11h12v7h-3v-4H7v4H4z" fill="#3e97d6" /></svg>
        <div className="flex h-[3px] w-[35px]"><div className="w-[25px] bg-[#8a2cc0]" /><div className="grow bg-[#b183d6]" /></div>
      </div>
      <Slot bar="w-[35px]">
        <svg viewBox="0 0 20 20" className="h-5 w-5"><circle cx="10" cy="10" r="9.300" fill="#fbc116" /><path d="M1.900 5.400A9.300 9.300 0 0 0 9.800 19.300L14 12.300 10 10z" fill="#27984f" /><path d="M1.900 5.400A9.300 9.300 0 0 1 18.100 5.400H10z" fill="#d9453a" /><path d="M10 10L1.900 5.400H10z" fill="#d9453a" /><circle cx="10" cy="10" r="4.600" fill="#fff" /><circle cx="10" cy="10" r="3.600" fill="#4a87ee" /></svg>
      </Slot>
      <Slot><div className="mt-[1px] h-[18px] w-[18px] rounded-full bg-black"><FaSpotify className="h-[18px] w-[18px] text-[#1ed05e]" /></div></Slot>
      <Slot><Office letter="P" dark="#b93a1e" mid="#e2603f" light="#f38b6c" tab="#c13b1b" round /></Slot>
      <Slot><Office letter="X" dark="#185c37" mid="#1e8550" light="#2fb573" tab="#107c41" /></Slot>
      <Slot><Office letter="W" dark="#103f91" mid="#1e60bf" light="#3aa0e8" tab="#185abd" /></Slot>
      <Slot bar="w-[35px]"><div className="flex h-5 w-5 items-center justify-center rounded-full bg-[#5563ea] text-white"><FaDiscord className="h-[13px] w-[13px]" /></div></Slot>
      <Slot>
        <svg viewBox="0 0 20 20" className="h-5 w-5"><path d="M10 19.500A9 9 0 0 1 1 10Q1 6 4 2.500L5 5q2-1 3-1Q9 1.500 12 .5q1 2.500 4 4.500 3.500 3 3 7-1 7-9 7.500z" fill="#f9662c" /><path d="M12 .5q1 2.500 4 4.500 3.500 3 3 7l-3-2Q15 6 12 5z" fill="#fcc92f" /><circle cx="10" cy="10.500" r="4.500" fill="#8340c8" /><path d="M1 10Q2 6 6 7l4 1q-1 2-3 2.500 1 3 4 2.500 3 0 4-2 0 6-5.500 6.500Q2 17 1 10z" fill="#fb5233" /></svg>
      </Slot>
      <Slot>
        <svg viewBox="0 0 20 20" className="h-5 w-5"><path d="M10 0l9 5v10l-9 5-9-5V5z" fill="#2f6cb5" /><path d="M10 0l9 5-9 5-9-5z" fill="#a9c83e" /><path d="M1 5v10l9 5V10z" fill="#c2355a" /><path d="M1 5v6l5-4z" fill="#3a72b0" /><path d="M10 4l5.500 3v6.500L10 16.500l-5.500-3V7z" fill="#eef3f1" /></svg>
      </Slot>
      <Slot bar="w-[35px]"><div className="flex h-5 w-5 items-center justify-center bg-[#8a2cc0]"><div className="flex h-[15px] w-[15px] items-center justify-center rounded-full bg-[#3fc35a] text-white"><FaWhatsapp className="h-[14px] w-[14px]" /></div></div></Slot>
      <Slot>
        <svg viewBox="0 0 20 20" className="h-5 w-5"><rect x="2" y="2" width="16" height="16" rx="3.500" fill="#22303c" /><ellipse cx="10" cy="7" rx="2" ry="2.800" fill="#4fb3ea" /><ellipse cx="7" cy="12" rx="2.600" ry="2" fill="#c4d867" /><ellipse cx="13" cy="12" rx="2.600" ry="2" fill="#e8604c" /></svg>
      </Slot>
      <Slot>
        <svg viewBox="0 0 20 20" className="h-5 w-5"><path d="M0 0h20v20H0z" fill="#1f1f1f" /><path d="M10 2.500H7.500a2.500 2.500 0 0 0 0 5H10z" fill="#ee4f23" /><path d="M10 2.500h2.500a2.500 2.500 0 0 1 0 5H10z" fill="#fb7463" /><path d="M10 7.500H7.500a2.500 2.500 0 0 0 0 5H10z" fill="#9e5bf7" /><circle cx="12.500" cy="10" r="2.500" fill="#28b8f5" /><path d="M10 12.500H7.500a2.500 2.500 0 1 0 2.500 2.500z" fill="#17c97b" /></svg>
      </Slot>
      <Slot>
        <svg viewBox="0 0 20 20" className="h-5 w-5"><path d="M10 .5q1 0 2 1l7 7q2 3-1 3.800l-4 1 2.500 1-1 1.500-3 .5-1 2-2 1.500-1.500-2-3-1 1.500-1.500-5-2.500Q-.5 11.500 1.500 8.500L8 1.500q1-1 2-1z" fill="#111518" /><path d="M10 1.500l5 5-2 1.500-1.500-1.500L10 8 8.500 6.500 6.500 8 5 6.500z" fill="#c8d2dc" /><path d="M3 10.500q6 3 13 .5" stroke="#5d6b7c" fill="none" strokeWidth="1.200" /></svg>
      </Slot>
      <Slot><div className="mt-px flex h-[18px] w-[17px] items-center justify-center bg-[#f2f2f2] text-black"><UnityLogo className="h-[9px] w-[10px]" /></div></Slot>
      <Slot>
        <svg viewBox="0 0 20 20" className="h-5 w-5"><circle cx="10" cy="10" r="9.500" fill="#fdfdfd" /><rect x="5.500" y="5" width="9" height="10" rx="2" fill="#3a7fe0" /><path d="M5.500 7q0-2 2-2h3l-5 6z" fill="#3bbf7b" /><path d="M8 15l2.500-6 2.500 6M9 13h3M14.500 9v6" stroke="#14315f" strokeWidth="1.200" fill="none" /></svg>
      </Slot>
      <Slot bar="w-[35px]">
        <svg viewBox="0 0 20 20" className="h-5 w-5"><path d="M0 6.500L2 5l12.500 9.500V20z" fill="#2499e3" /><path d="M0 13.500L2 15 14.500 5.500V0z" fill="#1374b8" /><path d="M14.500 0L20 2.500v15L14.500 20z" fill="#2ba5f0" /></svg>
      </Slot>
      <Slot bar="w-[35px]">
        <svg viewBox="0 0 20 20" className="h-5 w-5"><path d="M0 0h20v20H0z" fill="#f04e23" /><path d="M9.500 3v12q-1 3-4 3 1-2 .5-3.500Q3.500 12 3.500 8q1-5 6-5z" fill="#fff" /><path d="M10.800 15V5q1-2.500 5-3-1.500 2-1 3.500 2.500 2 1.500 6-1 3-5.500 3.500z" fill="#fff" /></svg>
      </Slot>
      <Slot bar="w-[46px]" bg="bg-white/65"><div className="mt-px flex h-[18px] w-[18px] items-center justify-center bg-[#111] text-white"><UnityLogo className="h-[10px] w-[10px]" /></div></Slot>
      <Slot bar="w-[35px]">
        <svg viewBox="0 0 20 20" className="h-5 w-5"><path d="M17 2l1.500 1-.5 14-3 1z" fill="#8d8767" /><path d="M7 1.500L17 2l-1.500 15-2 1.500L1 16z" fill="#6fa9bd" /><path d="M7 2l9.500.5L12 15.500 1 15z" fill="#a9d5e2" /><path d="M9 2.200l7.500.3-3 8L5 6z" fill="#c6e6ee" /></svg>
      </Slot>
      <div className="ml-auto flex font-['Open_Sans'] text-[15px] leading-[39px] tracking-[-0.3px] text-black">
        <svg viewBox="0 0 16 10" className="mt-[14px] h-[10px] w-4" fill="none" stroke="#000" strokeWidth="1.400"><path d="M.5 9L8 1.500 15.500 9" /></svg>
        <svg viewBox="0 0 20 14" className="ml-[12px] mt-[12px] h-[14px] w-5"><path d="M1 3h4v3H1zM2 1v2M4 1v2M3 6v6h2" stroke="#000" fill="none" /><path d="M6.500 2.500h11v10h-11zM18 5.500h1.500v4H18" stroke="#000" fill="none" /><path d="M8 4h8.500v7H8z" /></svg>
        <svg viewBox="0 0 16 16" className="ml-[12px] mt-[12px] h-4 w-4" fill="none" stroke="#000" strokeWidth="1.300"><path d="M1 15.500Q1 2 15 1.500M4.500 15.500Q5 5.500 15 5M8 15.500Q8.500 9 15 8.500" /><path d="M11 15.500Q11.500 12 15 12" strokeWidth="1" /><circle cx="13.500" cy="14" r="1.300" fill="#000" /></svg>
        <svg viewBox="0 0 20 18" className="ml-[12px] mt-[10px] h-[18px] w-5" fill="none" stroke="#000" strokeWidth="1.200"><path d="M1 6h3l4-4v14l-4-4H1z" /><path d="M10.500 6.500q1.500 2.500 0 5" /><path d="M13.500 4q3 5 0 10M16.500 1.500q4.500 7.500 0 15" stroke="#9a98a8" /></svg>
        <span className="ml-[14px] w-[44px]">IND</span>
        <span className="w-[58px] tracking-[-0.6px]">11:05</span>
        <svg viewBox="0 0 21 20" className="mt-[9px] h-5 w-[21px]"><path d="M0 0h20v15h-8l-4 4v-4H0z" /><path d="M4 4.500h12M4 8h12M4 11.500h8" stroke="#fff" strokeWidth="1.200" /><path d="M16 9q3 5-4 7.500 3 4 7 1.500 3.500-5-3-9z" stroke="#e8daee" strokeWidth="1.200" /></svg>
        <div className="ml-[24px] mr-[5px] w-px bg-[#aea7b8]" />
      </div>
    </div>
  );
}

export default function App() {
  return (
    <div className="flex h-[1080px] w-[1920px] flex-col overflow-hidden bg-[#141414]">
      <TitleBar />
      <MenuBar />
      <div className="flex grow flex-col font-[Inter,sans-serif] text-[15px] leading-[20px] tracking-[0.25px]">
        <MainToolbar />
        <div className="flex h-[923px]">
          <div className="flex w-[1574px] flex-col">
            <div className="flex h-[543px]">
              <ScenePanel />
              <GamePanel />
            </div>
            <div className="mt-[2px] flex h-[378px]">
              <HierarchyPanel />
              <ProjectPanel />
            </div>
          </div>
          <InspectorPanel />
        </div>
        <StatusBar />
      </div>
      <Taskbar />
    </div>
  );
}
